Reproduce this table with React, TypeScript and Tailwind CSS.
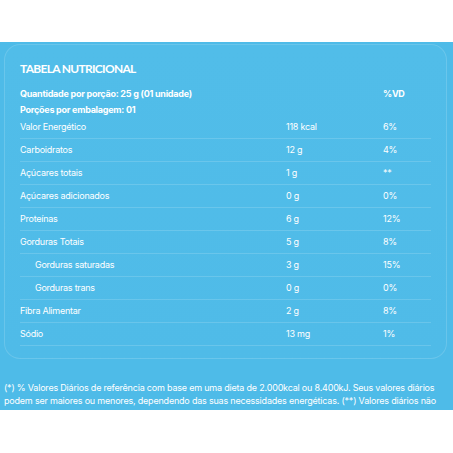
import React from "react";

const rows: { name: string; qty: string; vd: string; indent?: boolean }[] = [
  { name: "Valor Energético", qty: "118 kcal", vd: "6%" },
  { name: "Carboidratos", qty: "12 g", vd: "4%" },
  { name: "Açúcares totais", qty: "1 g", vd: "**" },
  { name: "Açúcares adicionados", qty: "0 g", vd: "0%" },
  { name: "Proteínas", qty: "6 g", vd: "12%" },
  { name: "Gorduras Totais", qty: "5 g", vd: "8%" },
  { name: "Gorduras saturadas", qty: "3 g", vd: "15%", indent: true },
  { name: "Gorduras trans", qty: "0 g", vd: "0%", indent: true },
  { name: "Fibra Alimentar", qty: "2 g", vd: "8%" },
  { name: "Sódio", qty: "13 mg", vd: "1%" },
];

export default function App() {
  return (
    <div className="w-[453px] h-[453px] bg-white font-['Inter',sans-serif]">
      <div className="h-[42px]" />
      {/* Blue section */}
      <section className="h-[368px] overflow-hidden bg-[#4ebbe8] text-white">
        <div className="ml-1 mr-[6px] mt-[2px] rounded-[16px] border border-white/15 bg-gradient-to-b from-[#51bde9] to-[#4fbbe8] pt-[12px] pb-[12px]">
          <h3 className="pl-[15px] text-[12px] font-bold leading-[24px] tracking-[-0.7px] font-['Lato',sans-serif]">
            TABELA NUTRICIONAL
          </h3>
          <div className="px-[15px] mt-[4px] text-[9px] tracking-[-0.25px]">
            <div className="flex h-[18px] items-center font-bold">
              <span className="flex-1">Quantidade por porção: 25 g (01 unidade)</span>
              <span className="w-[48px]">%VD</span>
            </div>
            <div className="flex h-[13px] items-center font-bold pt-[1px]">
              <span>Porções por embalagem: 01</span>
            </div>
            {rows.map((r) => (
              <div
                key={r.name}
                className="flex h-[23px] items-center border-b border-white/15"
              >
                <span className={r.indent ? "flex-1 pl-[15px]" : "flex-1"}>{r.name}</span>
                <span className="w-[97px]">{r.qty}</span>
                <span className="w-[48px]">{r.vd}</span>
              </div>
            ))}
          </div>
        </div>
        <p className="px-1 mt-[22px] text-[9px] leading-[13px] tracking-[-0.2px]">
          (*) % Valores Diários de referência com base em uma dieta de 2.000kcal ou 8.400kJ. Seus valores diários
          podem ser maiores ou menores, dependendo das suas necessidades energéticas. (**) Valores diários não
          estabelecidos.
        </p>
      </section>
    </div>
  );
}
